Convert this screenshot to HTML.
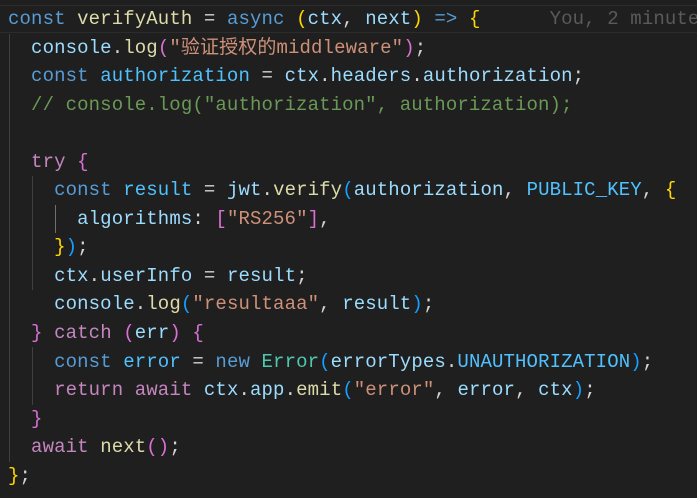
<!DOCTYPE html>
<html><head><meta charset="utf-8"><style>
html,body{margin:0;padding:0;background:#1f1f1f;width:697px;height:498px;overflow:hidden;position:relative}
.code{position:absolute;left:8px;top:5px;width:689px;overflow:hidden;font-family:"Liberation Mono","Noto Sans CJK SC",monospace;font-size:19px;letter-spacing:0.12px;line-height:28.55px;white-space:pre;color:#d4d4d4}
.hl{position:absolute;left:0;top:5px;width:697px;height:26px;border-top:1px solid #2c2c2c;border-bottom:1px solid #2c2c2c;background:#1f1f1f}
.g{position:absolute;width:1px;background:#404040}
.k{color:#569cd6}.v{color:#9cdcfe}.c{color:#4fc1ff}.f{color:#dcdcaa}.s{color:#ce9178}.cm{color:#6a9955}
.y{color:#ffd700}.p{color:#da70d6}.b{color:#179fff}.ctl{color:#c586c0}.t{color:#4ec9b0}
.bl{color:#5a5a5a}
</style></head><body>
<div class="hl"></div>
<div class="g" style="left:9px;top:34px;height:428px"></div>
<div class="g" style="left:32px;top:176px;height:114px"></div>
<div class="g" style="left:32px;top:347px;height:58px"></div>
<div class="g" style="left:55px;top:205px;height:28px;background:#707070"></div>
<div class="code"><span class="k">const</span> <span class="f">verifyAuth</span> = <span class="k">async</span> <span class="y">(</span><span class="v">ctx</span>, <span class="v">next</span><span class="y">)</span> <span class="k">=&gt;</span> <span class="y">{</span>      <span class="bl">You, 2 minute</span>
  <span class="v">console</span>.<span class="f">log</span><span class="p">(</span><span class="s">"验证授权的middleware"</span><span class="p">)</span>;
  <span class="k">const</span> <span class="c">authorization</span> = <span class="v">ctx</span>.<span class="v">headers</span>.<span class="v">authorization</span>;
  <span class="cm">// console.log("authorization", authorization);</span>

  <span class="ctl">try</span> <span class="p">{</span>
    <span class="k">const</span> <span class="c">result</span> = <span class="v">jwt</span>.<span class="f">verify</span><span class="b">(</span><span class="v">authorization</span>, <span class="c">PUBLIC_KEY</span>, <span class="y">{</span>
      <span class="v">algorithms</span>: <span class="p">[</span><span class="s">"RS256"</span><span class="p">]</span>,
    <span class="y">}</span><span class="b">)</span>;
    <span class="v">ctx</span>.<span class="v">userInfo</span> = <span class="v">result</span>;
    <span class="v">console</span>.<span class="f">log</span><span class="b">(</span><span class="s">"resultaaa"</span>, <span class="v">result</span><span class="b">)</span>;
  <span class="p">}</span> <span class="ctl">catch</span> <span class="p">(</span><span class="v">err</span><span class="p">)</span> <span class="p">{</span>
    <span class="k">const</span> <span class="c">error</span> = <span class="k">new</span> <span class="t">Error</span><span class="b">(</span><span class="v">errorTypes</span>.<span class="c">UNAUTHORIZATION</span><span class="b">)</span>;
    <span class="ctl">return</span> <span class="ctl">await</span> <span class="v">ctx</span>.<span class="v">app</span>.<span class="f">emit</span><span class="b">(</span><span class="s">"error"</span>, <span class="v">error</span>, <span class="v">ctx</span><span class="b">)</span>;
  <span class="p">}</span>
  <span class="ctl">await</span> <span class="f">next</span><span class="p">()</span>;
<span class="y">}</span>;</div>
</body></html>
